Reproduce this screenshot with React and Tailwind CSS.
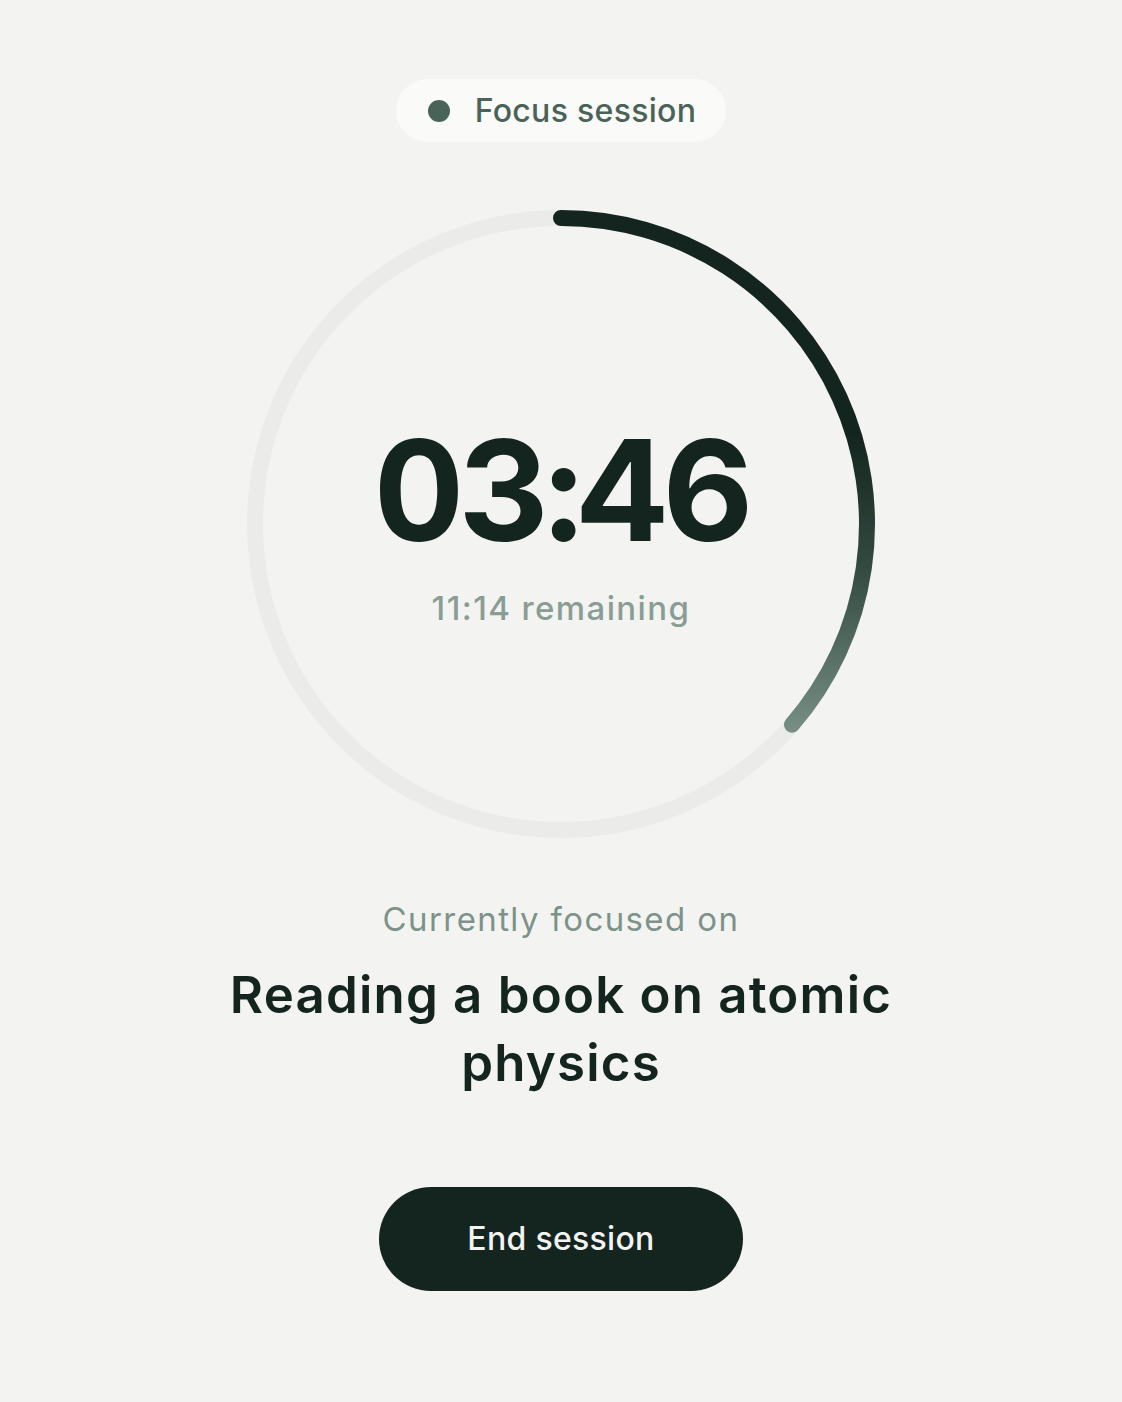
import React from "react";

function Ring() {
  const r = 306;
  const c = 320;
  const angle = 131; // degrees clockwise from top
  const rad = (angle * Math.PI) / 180;
  const ex = c + r * Math.sin(rad);
  const ey = c - r * Math.cos(rad);
  return (
    <svg width="640" height="640" viewBox="0 0 640 640" className="absolute inset-0">
      <defs>
        <linearGradient id="arcg" gradientUnits="userSpaceOnUse" x1="0" y1="230" x2="0" y2="540">
          <stop offset="0" stopColor="#13251e" />
          <stop offset="0.45" stopColor="#354c43" />
          <stop offset="1" stopColor="#7c948a" />
        </linearGradient>
      </defs>
      <circle cx={c} cy={c} r={r} fill="none" stroke="#ebecea" strokeWidth="16" />
      <path
        d={`M ${c} ${c - r} A ${r} ${r} 0 0 1 ${ex} ${ey}`}
        fill="none"
        stroke="url(#arcg)"
        strokeWidth="16"
        strokeLinecap="round"
      />
    </svg>
  );
}

export default function App() {
  return (
    <div
      className="min-h-[1402px] w-full bg-[#f3f4f2] flex flex-col items-center"
      style={{ fontFamily: "Inter, 'Noto Sans', sans-serif" }}
    >
      <div className="mt-[79px] h-[63px] rounded-full bg-[#fafaf9] flex items-center pl-[32px] pr-[30px] gap-[25px]">
        <span className="w-[22px] h-[22px] rounded-full bg-[#4a6358]" />
        <span className="text-[32px] leading-[40px] font-medium text-[#4a6358] tracking-[0.3px]">
          Focus session
        </span>
      </div>

      <div className="relative mt-[62px] w-[640px] h-[640px] flex flex-col items-center justify-center">
        <Ring />
        <div className="relative flex flex-col items-center">
          <div className="text-[140px] leading-[140px] font-bold text-[#13251e] tracking-[-5px] tabular-nums">
            03:46
          </div>
          <div className="mt-[28px] text-[33px] leading-[40px] font-medium text-[#8a9d94] tracking-[1.4px]">
            11:14 remaining
          </div>
        </div>
      </div>

      <div className="mt-[55px] text-[33px] leading-[40px] text-[#7d9288] tracking-[1.4px]">
        Currently focused on
      </div>
      <div className="mt-[22px] w-[720px] text-center text-[51px] leading-[68px] font-semibold text-[#13251e] tracking-[1.2px]">
        Reading a book on atomic physics
      </div>

      <button className="mt-[90px] w-[364px] h-[104px] rounded-full bg-[#14251f] text-[#f3f4f2] text-[32px] leading-[40px] font-medium tracking-[0.3px]">
        End session
      </button>
    </div>
  );
}
